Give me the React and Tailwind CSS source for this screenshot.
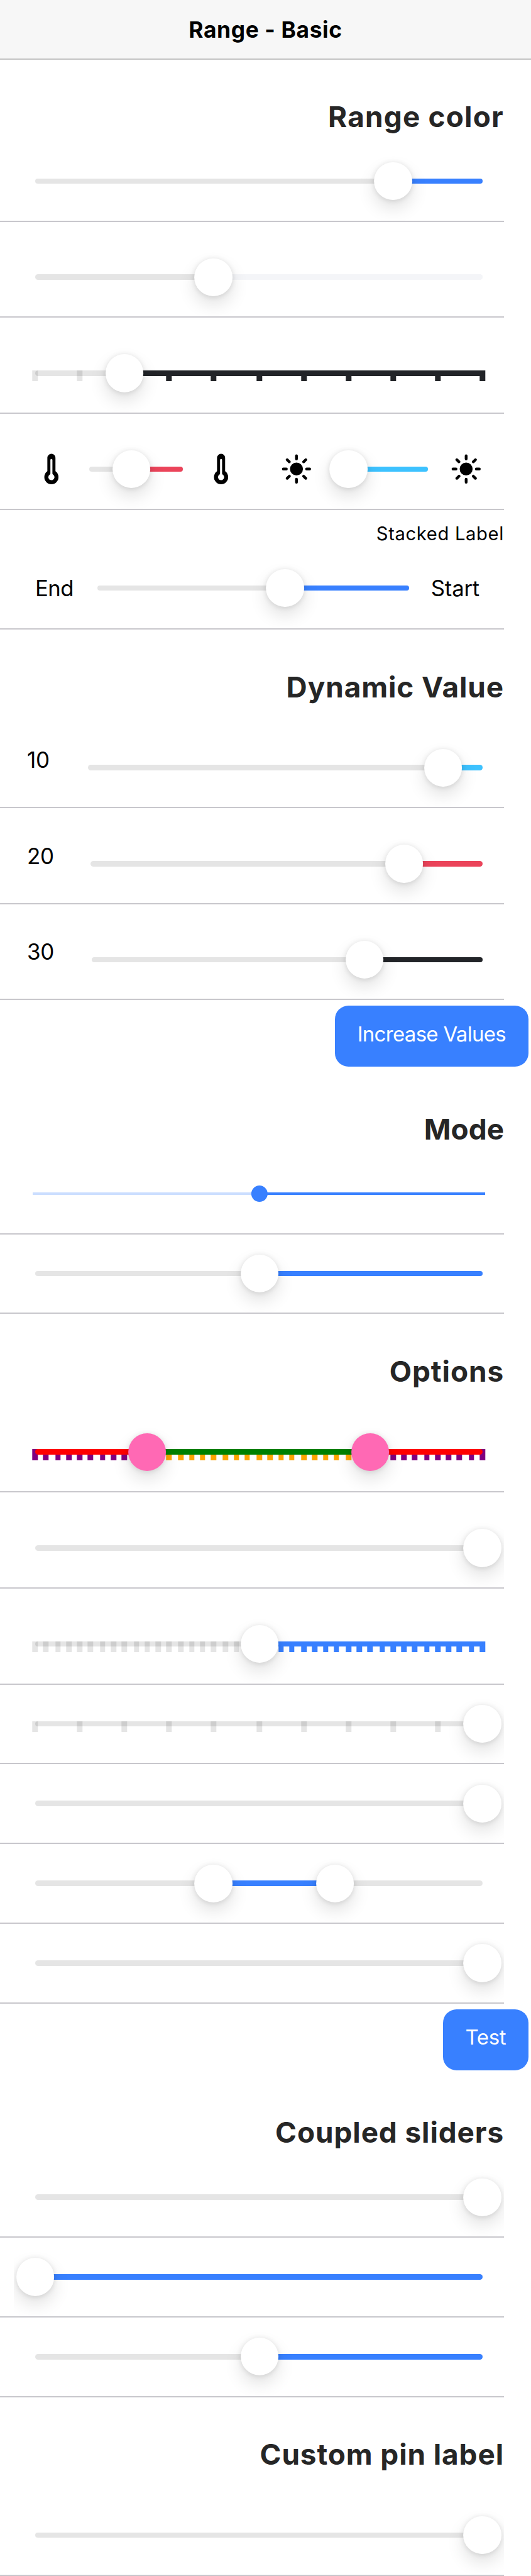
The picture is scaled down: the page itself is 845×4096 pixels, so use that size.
import React from "react";
import { IoThermometer, IoSunny } from "react-icons/io5";

// Device pixels per layout unit.
const U = 2.15;

const KNOB =
  "absolute top-1/2 size-[60.2px] translate-x-1/2 -translate-y-1/2 rounded-full shadow-[0_1px_8.6px_rgba(0,0,0,0.12),0_13px_28px_rgba(0,0,0,0.12)]";

function Slider({
  units = 330.9,
  from = 0,
  to = 0,
  dual = false,
  steps = 0,
  active = "bg-[#3880ff]",
  tick = "bg-[#3880ff]",
  base = "bg-black/10",
  baseTick = "bg-black/10",
  knob = "bg-white",
}) {
  const at = (v) => Math.round(units * v) * U;
  const ticks = steps ? Array.from({ length: steps + 1 }, (_, i) => i / steps) : [];
  const isActive = (v) => v >= from && v <= to && to > 0;
  return (
    <div className="relative h-[8.6px] min-w-0 flex-1">
      {ticks.map((v) => (
        <div
          key={v}
          className={`absolute top-0 h-[17.2px] w-[8.6px] translate-x-1/2 ${isActive(v) ? tick : baseTick}`}
          style={{ right: at(v) }}
        />
      ))}
      <div className={`absolute inset-0 rounded-full ${base}`} />
      <div
        className={`absolute inset-y-0 rounded-full ${active}`}
        style={{ right: at(from), width: at(to) - at(from) }}
      />
      <div className={`${KNOB} ${knob}`} style={{ right: at(to) }} />
      {dual && <div className={`${KNOB} ${knob}`} style={{ right: at(from) }} />}
    </div>
  );
}

function Range({ left, right, ...props }) {
  return (
    <div className="flex h-[125px] min-w-0 flex-1 items-center gap-[34.5px] overflow-hidden px-[34.5px]">
      {left}
      <Slider {...props} />
      {right}
    </div>
  );
}

function Row({ pin = false, label, labelWidth = "", children }) {
  return (
    <div
      className={`mr-[43px] flex items-end border-b-2 border-[#c8c7cc] ${pin ? "h-[152.65px]" : "h-[126.85px]"} ${label ? "pl-[43px]" : "pl-[21.5px]"}`}
    >
      {label && (
        <div className={`flex h-[125px] shrink-0 items-center pb-[25px] text-[35px] tracking-[-0.3px] text-black ${labelWidth}`}>
          {label}
        </div>
      )}
      {children}
    </div>
  );
}

function Heading({ children, track = "tracking-[0.9px]" }) {
  return (
    <div className="flex h-[131.15px] items-end justify-end pr-[43px] pb-[12.5px]">
      <h2 className={`text-[45.9px] leading-[55.5px] font-bold whitespace-nowrap text-[#262626] ${track}`}>{children}</h2>
    </div>
  );
}

function Button({ children, size }) {
  return (
    <div className="flex justify-end py-[8.6px] pr-[4.3px]">
      <button
        className={`flex h-[97px] items-center justify-center rounded-[21.5px] bg-[#3880ff] pb-[5.6px] text-[33px] whitespace-nowrap text-white ${size}`}
      >
        {children}
      </button>
    </div>
  );
}

const Thermo = () => <IoThermometer className="size-[51.6px] shrink-0 text-black" />;
const Sun = () => <IoSunny className="size-[51.6px] shrink-0 text-black" />;

export default function App() {
  return (
    <div className="h-[4096px] w-[845px] overflow-hidden bg-white font-['Inter',sans-serif]">
      <header className="flex h-[94.6px] items-center justify-center border-b-2 border-[#c4c4c4] bg-[#f7f7f7] pt-[2.6px]">
        <h1 className="text-[35.4px] font-bold tracking-[0.6px] text-black">Range - Basic</h1>
      </header>

      <Heading track="tracking-[1.2px]">Range color</Heading>
      <Row>
        <Range to={0.2} />
      </Row>
      <Row pin>
        <Range to={0.6} active="bg-[#f4f5f8]" base="bg-[linear-gradient(to_right,#e5e5e5_40%,#f4f5f8_40%)]" />
      </Row>
      <Row pin>
        <Range to={0.8} steps={10} active="bg-[#222428]" tick="bg-[#222428]" />
      </Row>
      <Row pin>
        <Range left={<Thermo />} right={<Thermo />} units={69.7} to={0.544} active="bg-[#eb445a]" />
        <Range left={<Sun />} right={<Sun />} units={69.7} to={0.85} active="bg-[#3dc2ff]" />
      </Row>
      <div className="mr-[43px] flex h-[190.9px] flex-col justify-between border-b-2 border-[#c8c7cc] pt-[20.9px]">
        <div className="h-[35px] text-right text-[29.2px] leading-[35.3px] tracking-[0.65px] text-black">Stacked Label</div>
        <div className="mb-[1.8px] ml-[21.5px] flex">
          <Range
            left={<span className="w-[64.7px] shrink-0 text-[34.7px] tracking-[-0.5px] text-black">End</span>}
            right={<span className="w-[81.7px] shrink-0 text-[34.7px] tracking-[-0.2px] text-black">Start</span>}
            units={230.7}
            to={0.4}
          />
        </div>
      </div>

      <Heading>Dynamic Value</Heading>
      <Row pin label="10" labelWidth="w-[62.6px]">
        <Range units={291.8} to={0.1} active="bg-[#3dc2ff]" />
      </Row>
      <Row pin label="20" labelWidth="w-[66.9px]">
        <Range units={289.8} to={0.2} active="bg-[#eb445a]" />
      </Row>
      <Row pin label="30" labelWidth="w-[68.8px]">
        <Range units={288.9} to={0.3} active="bg-[#222428]" />
      </Row>
      <Button size="w-[307.7px] tracking-[-0.7px]">Increase Values</Button>

      <Heading track="tracking-normal">Mode</Heading>
      <Row>
        <div className="flex h-[125px] flex-1 items-center px-[30.2px]">
          <div className="relative h-[4.3px] flex-1 bg-[#cbdeff]">
            <div className="absolute inset-y-0 right-0 w-[359px] bg-[#3880ff]" />
            <div className="absolute top-1/2 right-[359px] size-[25.8px] translate-x-1/2 -translate-y-1/2 rounded-full bg-[#3880ff]" />
          </div>
        </div>
      </Row>
      <Row>
        <Range to={0.5} />
      </Row>

      <Heading>Options</Heading>
      <Row pin>
        <Range
          dual
          from={0.25}
          to={0.75}
          steps={40}
          active="bg-[#008000]"
          tick="bg-[#ffa500]"
          base="bg-[#ff0000]"
          baseTick="bg-[#800080]"
          knob="bg-[#ff69b4]"
        />
      </Row>
      <Row pin>
        <Range />
      </Row>
      <Row pin>
        <Range to={0.5} steps={40} />
      </Row>
      <Row>
        <Range steps={10} />
      </Row>
      <Row>
        <Range />
      </Row>
      <Row>
        <Range dual from={0.33} to={0.6} />
      </Row>
      <Row>
        <Range />
      </Row>
      <Button size="w-[135.8px] tracking-[-0.4px]">Test</Button>

      <Heading>Coupled sliders</Heading>
      <Row>
        <Range />
      </Row>
      <Row>
        <Range to={1} />
      </Row>
      <Row>
        <Range to={0.5} />
      </Row>

      <Heading>Custom pin label</Heading>
      <Row pin>
        <Range />
      </Row>
    </div>
  );
}
